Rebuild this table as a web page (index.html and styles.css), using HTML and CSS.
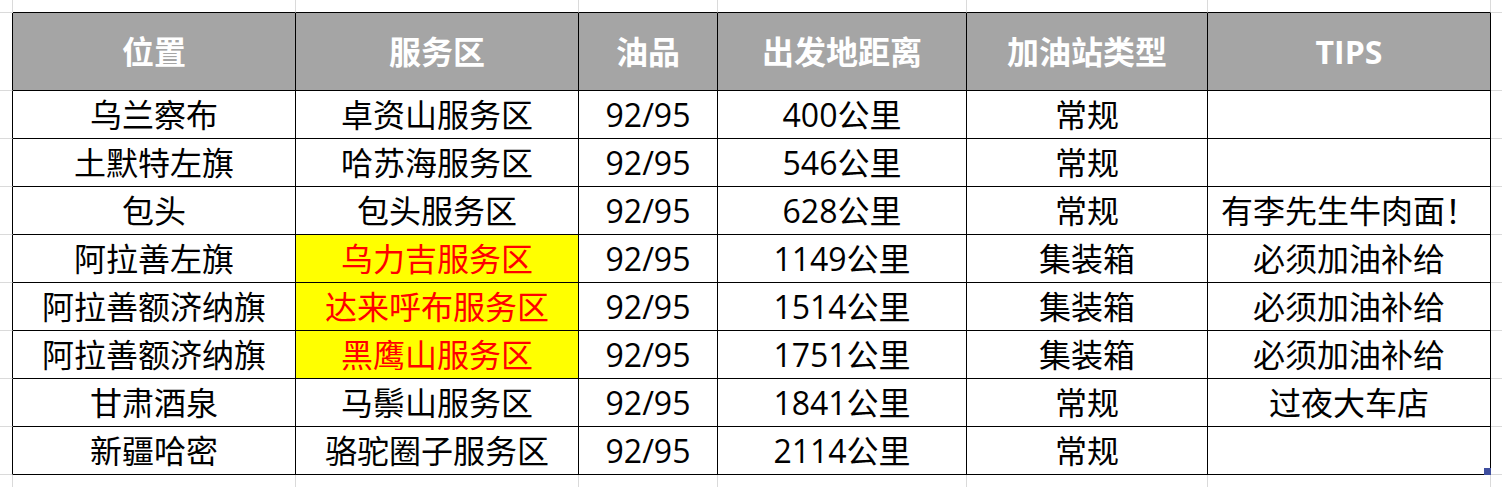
FILE: index.html
```html
<!DOCTYPE html>
<html lang="zh-CN">
<head>
<meta charset="utf-8">
<title>加油站</title>
<link rel="stylesheet" href="styles.css">
</head>
<body>
<table class="sheet">
  <colgroup>
    <col class="c-edge-l"><col class="c-pos"><col class="c-area"><col class="c-oil"><col class="c-dist"><col class="c-type"><col class="c-tips"><col class="c-edge-r">
  </colgroup>
  <tr class="r-top">
    <td class="g"></td><td class="g tb"></td><td class="g tb"></td><td class="g tb"></td><td class="g tb"></td><td class="g tb"></td><td class="g tb"></td><td class="g-end"></td>
  </tr>
  <tr class="r-head">
    <td class="g rb"></td><th>位置</th><th>服务区</th><th>油品</th><th>出发地距离</th><th>加油站类型</th><th>TIPS</th><td class="g-end"></td>
  </tr>
  <tr class="r-data">
    <td class="g rb"></td><td>乌兰察布</td><td>卓资山服务区</td><td>92/95</td><td>400公里</td><td>常规</td><td></td><td class="g-end"></td>
  </tr>
  <tr class="r-data">
    <td class="g rb"></td><td>土默特左旗</td><td>哈苏海服务区</td><td>92/95</td><td>546公里</td><td>常规</td><td></td><td class="g-end"></td>
  </tr>
  <tr class="r-data">
    <td class="g rb"></td><td>包头</td><td>包头服务区</td><td>92/95</td><td>628公里</td><td>常规</td><td>有李先生牛肉面！</td><td class="g-end"></td>
  </tr>
  <tr class="r-data">
    <td class="g rb"></td><td>阿拉善左旗</td><td class="hl">乌力吉服务区</td><td>92/95</td><td>1149公里</td><td>集装箱</td><td>必须加油补给</td><td class="g-end"></td>
  </tr>
  <tr class="r-data">
    <td class="g rb"></td><td>阿拉善额济纳旗</td><td class="hl">达来呼布服务区</td><td>92/95</td><td>1514公里</td><td>集装箱</td><td>必须加油补给</td><td class="g-end"></td>
  </tr>
  <tr class="r-data">
    <td class="g rb"></td><td>阿拉善额济纳旗</td><td class="hl">黑鹰山服务区</td><td>92/95</td><td>1751公里</td><td>集装箱</td><td>必须加油补给</td><td class="g-end"></td>
  </tr>
  <tr class="r-data">
    <td class="g rb"></td><td>甘肃酒泉</td><td>马鬃山服务区</td><td>92/95</td><td>1841公里</td><td>常规</td><td>过夜大车店</td><td class="g-end"></td>
  </tr>
  <tr class="r-data">
    <td class="g rb"></td><td>新疆哈密</td><td>骆驼圈子服务区</td><td>92/95</td><td>2114公里</td><td>常规</td><td class="last"><span class="handle"></span></td><td class="g-end"></td>
  </tr>
  <tr class="r-bottom">
    <td class="g"></td><td class="g"></td><td class="g"></td><td class="g"></td><td class="g"></td><td class="g"></td><td class="g"></td><td class="g-end"></td>
  </tr>
</table>
</body>
</html>
```

FILE: styles.css
```css
html, body {
  margin: 0;
  padding: 0;
  background: #ffffff;
  overflow: hidden;
}

.sheet {
  border-collapse: separate;
  border-spacing: 0;
  table-layout: fixed;
  width: 1502px;
  font-family: "Open Sans", "Noto Sans CJK SC", sans-serif;
  font-size: 32px;
  color: #000000;
}

.c-edge-l { width: 13px; }
.c-pos { width: 283px; }
.c-area { width: 283px; }
.c-oil { width: 139px; }
.c-dist { width: 249px; }
.c-type { width: 241px; }
.c-tips { width: 283px; }
.c-edge-r { width: 11px; }

.sheet td,
.sheet th {
  padding: 0;
  text-align: center;
  vertical-align: middle;
  white-space: nowrap;
  line-height: 1;
  border-right: 1px solid #000000;
  border-bottom: 1px solid #000000;
  box-sizing: border-box;
}

.sheet th {
  background: #a5a5a5;
  color: #ffffff;
  font-weight: 700;
}

.sheet td.g {
  border-right: 1px solid #dadada;
  border-bottom: 1px solid #dadada;
}

.sheet td.g.tb {
  border-bottom-color: #000000;
}

.sheet td.g.rb {
  border-right-color: #000000;
}

.sheet td.g-end {
  border-right: 0;
  border-bottom: 1px solid #dadada;
}

.r-top td { height: 13px; }
.r-head th, .r-head td { height: 78px; }
.r-data td { height: 48px; }
.r-bottom td { height: 13px; border-bottom: 0; }

.sheet td.hl {
  background: #ffff00;
  color: #ff0000;
}

.last {
  position: relative;
}

.handle {
  position: absolute;
  right: -1px;
  bottom: -1px;
  width: 7px;
  height: 7px;
  background: #3f4f9f;
}
```
